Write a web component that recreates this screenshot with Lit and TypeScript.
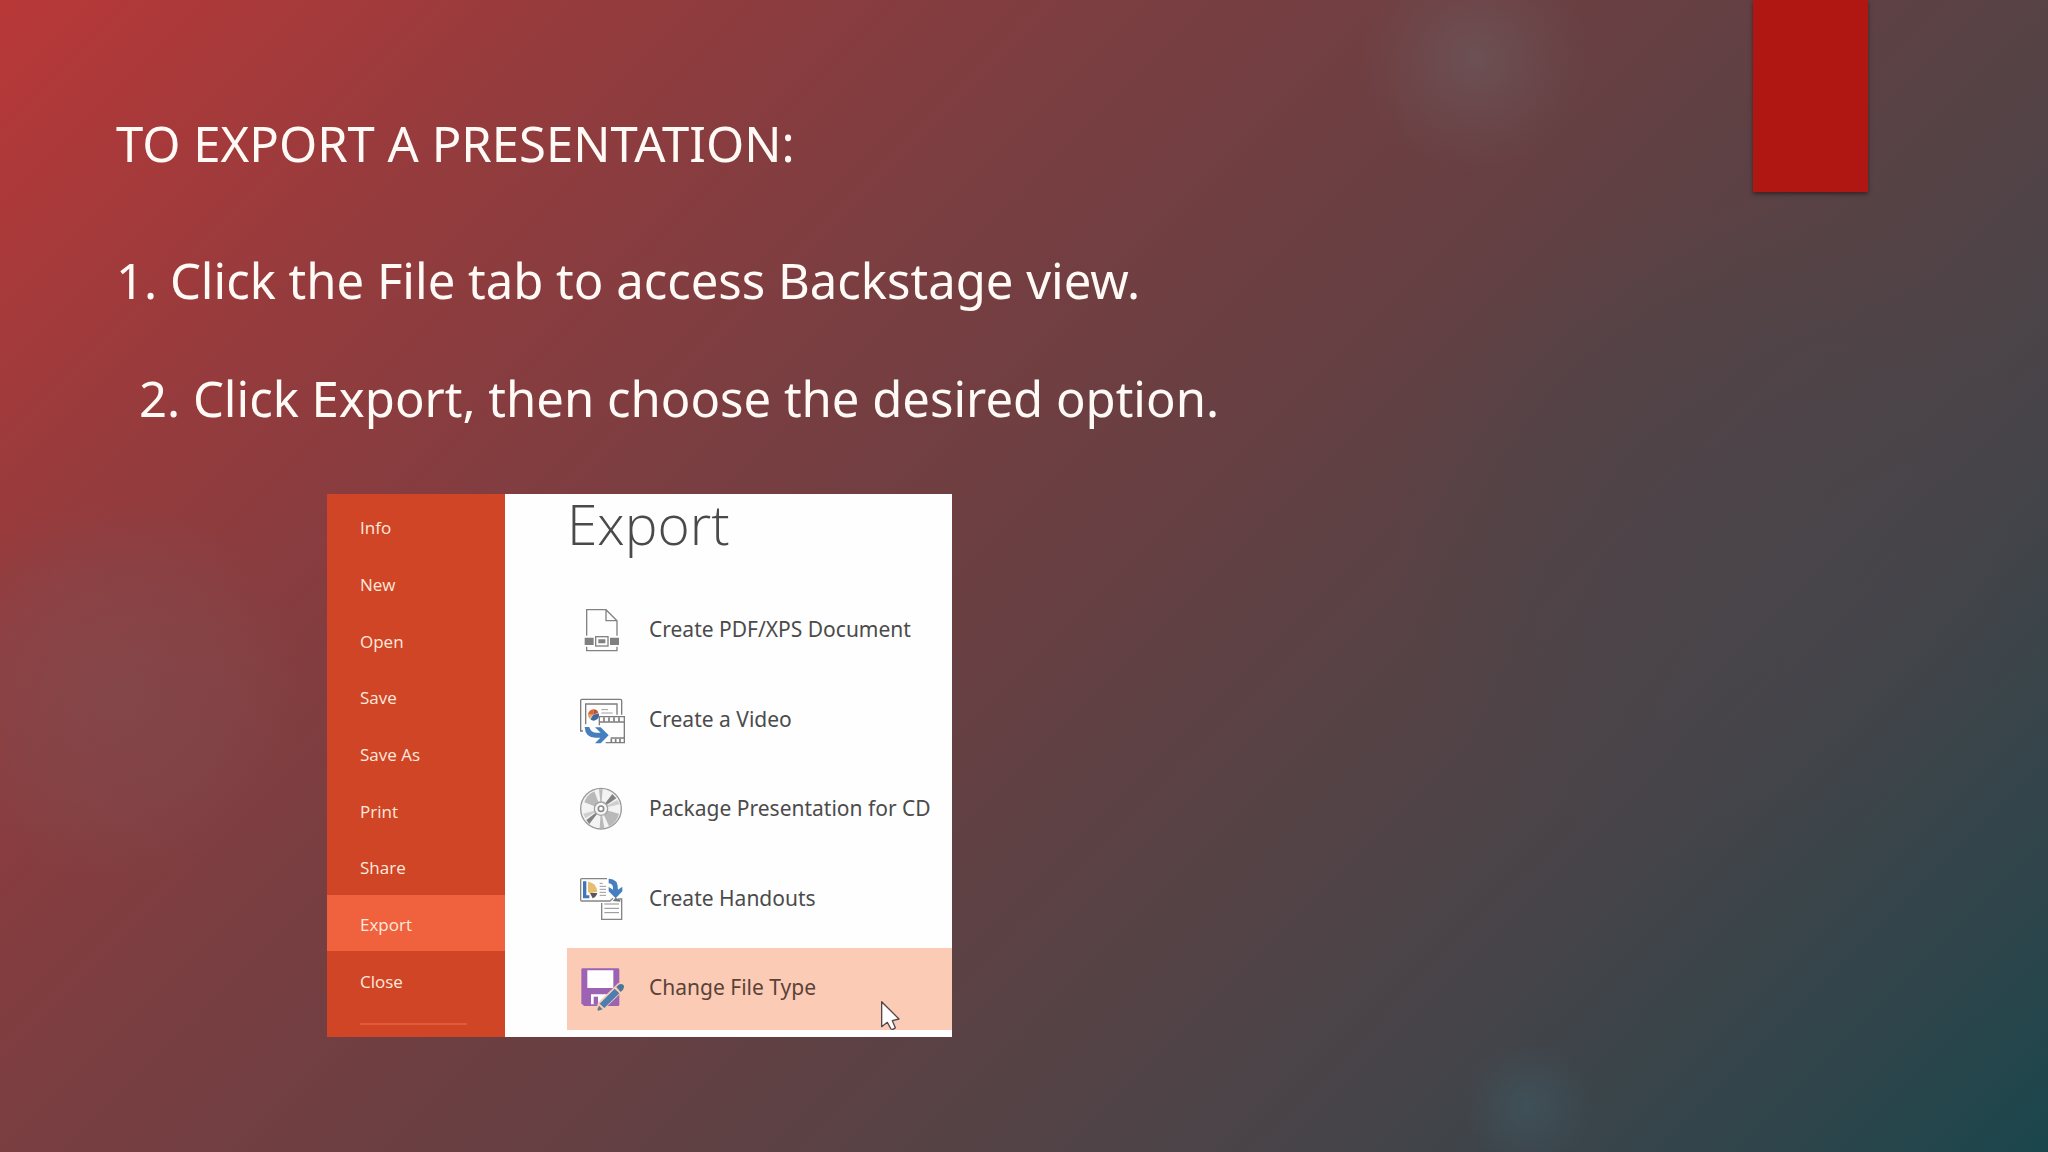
import { LitElement, html, css, svg } from "lit";
import { customElement } from "lit/decorators.js";
import { classMap } from "lit/directives/class-map.js";

const pdfIcon = svg`
  <g fill="none" stroke="#828282" stroke-width="4">
    <path d="M80 137V59H138L171 92V137M138 59V92H171M80 170V182H171V170" />
    <rect x="107" y="140" width="37" height="28" />
  </g>
  <path fill="#808080" d="M74 143H101V165H74ZM150 143H177V165H150ZM115 148H136V160H115Z" />`;

const videoIcon = svg`
  <g fill="none" stroke="#7d7d7d" stroke-width="4">
    <path d="M69 153H62V61Q62 58 65 58H181Q185 58 185 62V104" />
    <path d="M77 133V72H171V104" />
    <path stroke="#a0a0a0" stroke-width="3" d="M124 89H144M124 99H158" />
    <path d="M118 136V110H193V188H137M118 126H193M152 174H193" />
    <path stroke-width="5" d="M132 112V125M147 112V125M162 112V125M177 112V125M154 176V187M167 176V187M180 176V187" />
  </g>
  <path fill="#d9663a" d="M100 104H84A16 16 0 0 1 100 88Z" />
  <path fill="#e5a75d" d="M100 104L89 116A16 16 0 0 1 84 104Z" />
  <path fill="#c4512d" d="M100 88A16 16 0 0 1 115 98L100 104Z" />
  <path fill="#41689c" d="M100 104L116 100A16 16 0 0 1 91 118Z" />
  <path fill="#457fbd" d="M74 141H88Q92 158 108 158H122L105 142H122L146 166L122 190H105L121 173H106Q76 173 74 141Z" />`;

const discIcon = svg`
  <circle cx="123" cy="117" r="61" fill="#f3f3f3" stroke="#9a9a9a" stroke-width="4" />
  <g fill="#b9b9b9">
    <path d="M123 117L73 98A54 54 0 0 1 103 65Z" />
    <path d="M123 117L177 132A56 56 0 0 1 147 170Z" />
    <path d="M123 117L117 59H128Z" />
    <path d="M123 117L119 176H133Z" />
  </g>
  <g fill="#828282">
    <path d="M123 117L157 73L169 86Z" />
    <path d="M123 117L79 151L88 163Z" />
  </g>
  <g fill="#cfcfcf">
    <path d="M123 117L172 91L179 104Z" />
    <path d="M123 117L70 132L76 146Z" />
  </g>
  <circle cx="123" cy="117" r="20" fill="#f6f6f6" stroke="#a2a2a2" stroke-width="4" />
  <circle cx="123" cy="117" r="8" fill="#ffffff" stroke="#8b8b8b" stroke-width="5" />`;

const handoutIcon = svg`
  <g fill="none" stroke="#858585" stroke-width="4">
    <path d="M141 55H65Q62 55 62 58V119Q62 122 65 122H150L159 114" />
    <path stroke-width="3" stroke="#9a9a9a" d="M119 69H128M119 78H138M119 87H138M119 96H138M119 105H138" />
    <path d="M125 128V177H185V116H174" />
    <path stroke-width="3" stroke="#8e8e8e" d="M133 131H177M133 144H177M133 157H177" />
  </g>
  <path fill="#3f78b8" d="M69 63H79V105H88V114H69Z" />
  <path fill="#e7bd70" d="M84 64Q108 66 112 94L90 99L84 94Z" />
  <path fill="#5d5557" d="M90 98H112Q108 111 98 114Z" />
  <path fill="#457fbd" d="M146 55Q174 54 174 88L187 79V93L167 114L146 93V80L159 88Q161 70 146 69Z" />
  <path fill="#777777" d="M158 122L167 112L181 120V124Z" />`;

const saveIcon = svg`
  <path fill="#9c63b4" d="M68 85H174Q178 85 178 89V194Q178 198 174 198H72L64 190V89Q64 85 68 85Z" />
  <path fill="#ffffff" d="M82 91H160V144H82ZM93 163H144V193H93Z" />
  <path fill="#9c63b4" d="M101 170H114V194H101Z" />
  <path fill="#fbcbb5" d="M108 210L114 188L174 130Q184 124 193 133Q200 142 190 152L132 208L112 216Z" />
  <path fill="#4a7fae" d="M119 191L164 146L178 160L133 204Z" />
  <path fill="#4a7698" d="M169 141L176 134Q184 129 191 136Q195 142 189 149L182 156Z" />
  <path fill="#5f7b8c" d="M117 197L128 208L115 212Q111 210 113 206Z" />`;

const menu = ["Info", "New", "Open", "Save", "Save As", "Print", "Share", "Export", "Close"];

const options = [
  { label: "Create PDF/XPS Document", icon: pdfIcon, box: "57 51 144 144" },
  { label: "Create a Video", icon: videoIcon, box: "57 51 144 144" },
  { label: "Package Presentation for CD", icon: discIcon, box: "57 49 144 144" },
  { label: "Create Handouts", icon: handoutIcon, box: "57 47 144 144" },
  { label: "Change File Type", icon: saveIcon, box: "57 75 144 144" },
];

@customElement("export-panel")
export class ExportPanel extends LitElement {
  static styles = css`
    :host {
      position: relative;
      display: grid;
      grid-template-columns: 178px 1fr;
      width: 625px;
      background: #fefefe;
      font-family: "Noto Sans", "Open Sans", sans-serif;
    }
    button {
      border: 0;
      padding: 0;
      margin: 0;
      background: none;
      font: inherit;
      color: inherit;
      text-align: left;
    }
    .side {
      display: flex;
      flex-direction: column;
      padding: 4px 0 12px;
      background: #d04525;
      color: #ffe9dd;
      font-family: "Open Sans", "Noto Sans", sans-serif;
      font-size: 17px;
      font-weight: 500;
    }
    .menu {
      display: grid;
      grid-template-rows: repeat(9, 1fr);
      min-height: 510px;
    }
    .item {
      padding: 3px 0 0 33px;
    }
    .item.on {
      background: #f0613e;
    }
    .rule {
      width: 107px;
      height: 2px;
      margin: 15px 0 0 33px;
      border: 0;
      background: #e25a38;
    }
    .body {
      display: flex;
      flex-direction: column;
      justify-content: space-between;
      padding: 0 0 7px 62px;
    }
    .title {
      margin: 0;
      font-family: "Open Sans", "Noto Sans", sans-serif;
      font-size: 55px;
      line-height: 60px;
      font-weight: 300;
      color: #4a4a4a;
    }
    .options {
      display: flex;
      flex-direction: column;
      justify-content: space-between;
      min-height: 440px;
    }
    .option {
      display: flex;
      align-items: center;
      gap: 22px;
      height: 82px;
      padding-left: 12px;
      font-size: 21px;
      white-space: nowrap;
      color: #4b4b4b;
    }
    .option.on {
      background: #fbcbb5;
      color: #5a4238;
    }
    .label {
      padding-bottom: 4px;
    }
    .icon {
      width: 48px;
      height: 48px;
      flex: none;
    }
    .cursor {
      position: absolute;
      right: 52px;
      bottom: 7px;
      width: 20px;
      height: 30px;
    }
  `;

  render() {
    return html`
      <nav class="side">
        <div class="menu">
          ${menu.map(
            (name) => html`<button class=${classMap({ item: true, on: name === "Export" })}>${name}</button>`
          )}
        </div>
        <hr class="rule" />
      </nav>
      <section class="body">
        <h2 class="title">Export</h2>
        <div class="options">
          ${options.map(
            (o) => html`<button class=${classMap({ option: true, on: o.label === "Change File Type" })}>
              <svg class="icon" viewBox=${o.box} aria-hidden="true">${o.icon}</svg>
              <span class="label">${o.label}</span>
            </button>`
          )}
        </div>
      </section>
      <svg class="cursor" viewBox="960 181 60 90" aria-hidden="true">
        <path
          d="M965 186V261L982 248L993 268Q999 271 1006 264L997 243L1017 238Z"
          fill="#ffffff"
          stroke="#54454a"
          stroke-width="4"
          stroke-linejoin="round"
        />
      </svg>
    `;
  }
}

@customElement("app-root")
export class AppRoot extends LitElement {
  static styles = css`
    :host {
      display: block;
    }
    .slide {
      box-sizing: border-box;
      display: flex;
      align-items: flex-start;
      min-height: 100vh;
      padding: 0 180px 0 116px;
      color: #fffaf5;
      font-family: "Noto Sans", "Open Sans", sans-serif;
      background:
        radial-gradient(circle 115px at 72% 5%, rgba(108, 98, 102, 0.5), rgba(108, 92, 96, 0.28) 50%, transparent),
        radial-gradient(circle 190px at 5.5% 60%, rgba(126, 80, 84, 0.5), rgba(126, 80, 84, 0.3) 60%, transparent),
        radial-gradient(circle 65px at 74.6% 96%, rgba(64, 88, 98, 0.6), rgba(64, 84, 94, 0.3) 55%, transparent),
        radial-gradient(circle 330px at 84% 46%, rgba(70, 70, 76, 0.4), rgba(70, 70, 76, 0.25) 60%, transparent),
        linear-gradient(
          135deg,
          #b93838 0%,
          #963b3d 18%,
          #7a3e41 36%,
          #693f42 50%,
          #574245 64%,
          #454449 78%,
          #2d454b 92%,
          #1a464c 100%
        );
    }
    .content {
      flex: 1;
      padding: 109px 0 114px;
    }
    .heading,
    .step {
      margin: 0;
      font-size: 49px;
      line-height: 68px;
      font-weight: 400;
    }
    .steps {
      display: flex;
      flex-direction: column;
      gap: 50px;
      margin: 69px 0 62px;
    }
    .step.in {
      padding-left: 23px;
    }
    .shot {
      margin-left: 211px;
    }
    .ribbon {
      width: 115px;
      height: 192px;
      background: #b01713;
      box-shadow: 0 2px 4px rgba(30, 15, 15, 0.6);
    }
  `;

  render() {
    return html`
      <main class="slide">
        <div class="content">
          <h1 class="heading">TO EXPORT A PRESENTATION:</h1>
          <div class="steps">
            <p class="step">1. Click the File tab to access Backstage view.</p>
            <p class="step in">2. Click Export, then choose the desired option.</p>
          </div>
          <export-panel class="shot"></export-panel>
        </div>
        <div class="ribbon"></div>
      </main>
    `;
  }
}
